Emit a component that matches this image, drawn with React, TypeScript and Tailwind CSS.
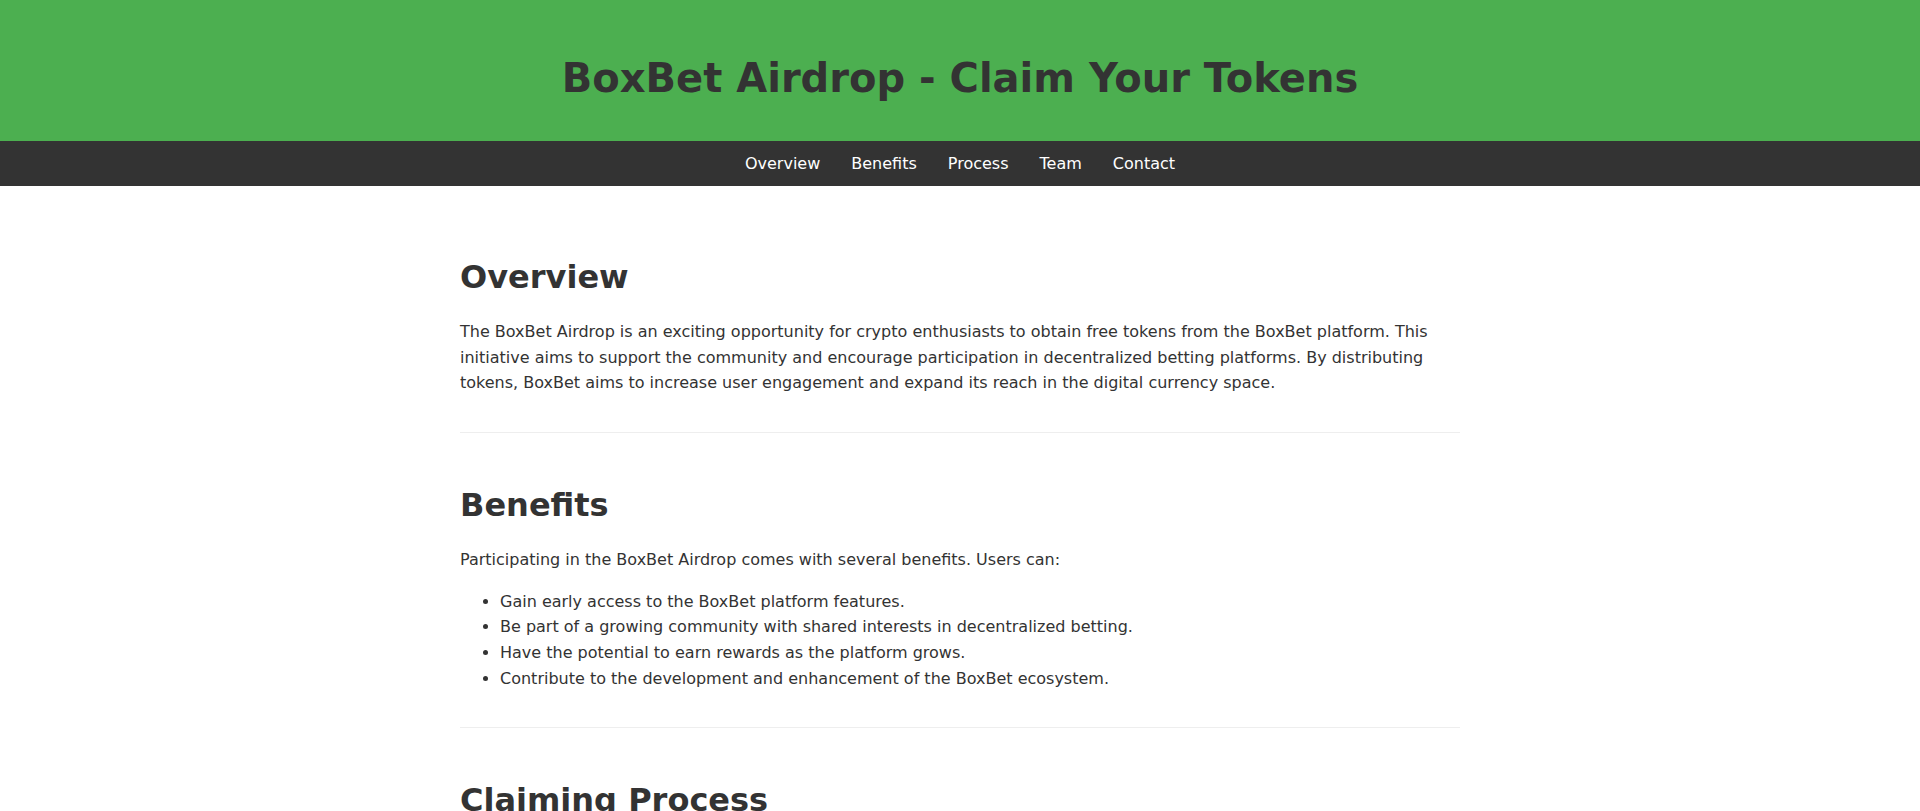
import React from "react";

const navLinks = ["Overview", "Benefits", "Process", "Team", "Contact"];

const benefits = [
  "Gain early access to the BoxBet platform features.",
  "Be part of a growing community with shared interests in decentralized betting.",
  "Have the potential to earn rewards as the platform grows.",
  "Contribute to the development and enhancement of the BoxBet ecosystem.",
];

const steps = [
  "Connect your crypto wallet to the BoxBet Airdrop page.",
  "Verify your eligibility by completing the required tasks.",
  "Submit your wallet address through the claim form.",
  "Wait for the distribution period to receive your tokens.",
  "Check your wallet balance once the airdrop has been processed.",
];

const team = [
  { name: "Alex Morgan", role: "Project Lead" },
  { name: "Jamie Chen", role: "Blockchain Developer" },
  { name: "Sam Rivera", role: "Community Manager" },
];

const Section: React.FC<{ id: string; title: string; children: React.ReactNode }> = ({
  id,
  title,
  children,
}) => (
  <section id={id} className="pt-[27px] pb-5 mb-5 border-b border-[#eee]">
    <h2 className="text-[32px] font-bold leading-[1.6]">{title}</h2>
    {children}
  </section>
);

export default function App() {
  return (
    <div className="h-screen overflow-y-scroll bg-white text-[#333] text-base leading-[1.6] font-['DejaVu_Sans',sans-serif] [&::-webkit-scrollbar]:w-[15px] [&::-webkit-scrollbar-track]:bg-[#fafafa] [&::-webkit-scrollbar-thumb]:bg-[#8b8b8b] [&::-webkit-scrollbar-thumb]:rounded-full [&::-webkit-scrollbar-thumb]:border-[4px] [&::-webkit-scrollbar-thumb]:border-solid [&::-webkit-scrollbar-thumb]:border-[#fafafa]">
      {/* Header */}
      <header className="bg-[#4caf50] pt-[46px] pb-[31px] text-center">
        <h1 className="text-[40px] font-bold leading-[1.6]">
          BoxBet Airdrop - Claim Your Tokens
        </h1>
      </header>

      {/* Nav */}
      <nav className="bg-[#333] h-[45px] flex items-center justify-center gap-[31px]">
        {navLinks.map((link) => (
          <a
            key={link}
            href={`#${link.toLowerCase()}`}
            className="text-white no-underline"
          >
            {link}
          </a>
        ))}
      </nav>

      <main className="max-w-[1000px] mx-auto pt-[39px] pb-10">
        <Section id="overview" title="Overview">
          <p className="mt-4 mb-4">
            The BoxBet Airdrop is an exciting opportunity for crypto enthusiasts
            to obtain free tokens from the BoxBet platform. This initiative aims
            to support the community and encourage participation in
            decentralized betting platforms. By distributing tokens, BoxBet aims
            to increase user engagement and expand its reach in the digital
            currency space.
          </p>
        </Section>

        <Section id="benefits" title="Benefits">
          <p className="mt-4 mb-4">
            Participating in the BoxBet Airdrop comes with several benefits.
            Users can:
          </p>
          <ul className="list-disc pl-10 mb-4">
            {benefits.map((b) => (
              <li key={b}>{b}</li>
            ))}
          </ul>
        </Section>

        <Section id="process" title="Claiming Process">
          <p className="mt-4 mb-4">
            Claiming your BoxBet tokens is simple. Follow the steps below to
            make sure you receive your share of the airdrop:
          </p>
          <ol className="list-decimal pl-10 mb-4">
            {steps.map((s) => (
              <li key={s}>{s}</li>
            ))}
          </ol>
          <p className="mt-4 mb-4">
            Please note that only one claim is allowed per wallet address.
            Duplicate or fraudulent submissions will be disqualified.
          </p>
        </Section>

        <Section id="team" title="Team">
          <p className="mt-4 mb-4">
            The BoxBet team is made up of experienced professionals in
            blockchain technology, gaming and community building.
          </p>
          <ul className="list-disc pl-10 mb-4">
            {team.map((m) => (
              <li key={m.name}>
                <strong>{m.name}</strong> - {m.role}
              </li>
            ))}
          </ul>
        </Section>

        <Section id="contact" title="Contact">
          <p className="mt-4 mb-4">
            For any questions about the BoxBet Airdrop, please reach out to our
            support team at support@boxbet.io or join our community channels
            for the latest updates.
          </p>
        </Section>
      </main>

      <footer className="bg-[#333] text-white text-center py-5">
        <p>&copy; 2024 BoxBet. All rights reserved.</p>
      </footer>
    </div>
  );
}
